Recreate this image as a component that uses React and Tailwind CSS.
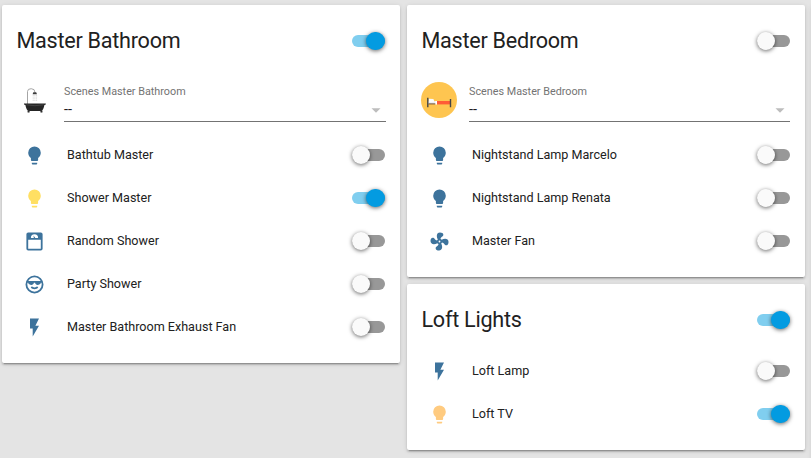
import React from 'react';

const PATHS = {
  bulb: 'M12,2A7,7 0 0,0 5,9C5,11.38 6.19,13.47 8,14.74V17A1,1 0 0,0 9,18H15A1,1 0 0,0 16,17V14.74C17.81,13.47 19,11.38 19,9A7,7 0 0,0 12,2M9,21A1,1 0 0,0 10,22H14A1,1 0 0,0 15,21V20H9V21Z',
  flash: 'M7,2V13H10V22L17,10H13L17,2H7Z',
  scale: 'M5,2H19A2,2 0 0,1 21,4V20A2,2 0 0,1 19,22H5A2,2 0 0,1 3,20V4A2,2 0 0,1 5,2M12,4A4,4 0 0,0 8,8H11.26L10.85,5.23L12.9,8H16A4,4 0 0,0 12,4M5,10V20H19V10H5Z',
  fan: 'M12,11A1,1 0 0,0 11,12A1,1 0 0,0 12,13A1,1 0 0,0 13,12A1,1 0 0,0 12,11M12.5,2C17,2 17.11,5.57 14.75,6.75C13.76,7.24 13.32,8.29 13.13,9.22C13.61,9.42 14.03,9.73 14.35,10.13C18.05,8.13 22.03,8.92 22.03,12.5C22.03,17 18.46,17.1 17.28,14.73C16.78,13.74 15.72,13.3 14.79,13.11C14.59,13.59 14.28,14 13.88,14.34C15.87,18.03 15.08,22 11.5,22C7,22 6.91,18.42 9.27,17.24C10.25,16.75 10.69,15.71 10.89,14.79C10.4,14.59 9.97,14.27 9.65,13.87C5.96,15.85 2,15.07 2,11.5C2,7 5.56,6.89 6.74,9.26C7.24,10.25 8.29,10.68 9.22,10.87C9.41,10.39 9.73,9.97 10.14,9.65C8.15,5.96 8.94,2 12.5,2Z',
  cool: 'M19,10C19,11.38 16.88,12.5 15.5,12.5C14.12,12.5 12.75,11.38 12.75,10H11.25C11.25,11.38 9.88,12.5 8.5,12.5C7.12,12.5 5,11.38 5,10H4.25C4.09,10.64 4,11.31 4,12A8,8 0 0,0 12,20A8,8 0 0,0 20,12C20,11.31 19.91,10.64 19.75,10H19M12,4C9.04,4 6.45,5.61 5.07,8H18.93C17.55,5.61 14.96,4 12,4M22,12A10,10 0 0,1 12,22A10,10 0 0,1 2,12A10,10 0 0,1 12,2A10,10 0 0,1 22,12M12,17.23C10.25,17.23 8.71,16.5 7.81,15.42L9.23,14C9.68,14.72 10.75,15.23 12,15.23C13.25,15.23 14.32,14.72 14.77,14L16.19,15.42C15.29,16.5 13.75,17.23 12,17.23Z',
};

function Toggle({ on }) {
  return (
    <button
      type="button"
      role="switch"
      aria-checked={!!on}
      className={`flex h-[12.6px] w-[33px] shrink-0 items-center rounded-full ${on ? 'justify-end bg-[#80ceef]' : 'justify-start bg-[#989898]'}`}
    >
      <span className={`h-[18px] shrink-0 rounded-full shadow-[0_1px_4px_rgba(0,0,0,0.6)] ${on ? 'w-[19px] bg-[#039be1]' : 'w-[18px] bg-[#fafafa]'}`} />
    </button>
  );
}

function Card({ title, on, children }) {
  return (
    <section className="rounded-[2px] bg-white pr-[15px] pb-[14.5px] pl-[14px] shadow-[0_2px_2px_rgba(0,0,0,0.14),0_1px_5px_rgba(0,0,0,0.12),0_3px_1px_-2px_rgba(0,0,0,0.2)]">
      <header className="flex h-[65.5px] items-center justify-between pt-[6.5px]">
        <h2 className="ml-[0.5px] text-[21.6px] leading-9 tracking-[-0.26px]">{title}</h2>
        <Toggle on={on} />
      </header>
      {children}
    </section>
  );
}

function SceneSelect({ label, icon, className = '' }) {
  return (
    <div className={`flex h-[63px] pt-[11.5px] ${className}`}>
      <div className="w-12 shrink-0">{icon}</div>
      <div className="flex h-[40px] flex-1 flex-col border-b border-[#737373]">
        <span className="mt-[2px] text-[10.8px] leading-[16px] text-[#737373]">{label}</span>
        <div className="flex h-[19px] items-center justify-between pr-[5px]">
          <span className="text-[14.4px] leading-5">--</span>
          <svg className="mt-px h-[5px] w-[10px]" viewBox="0 0 10 5" fill="#bdbdbd">
            <path d="M0.5 0.3H9.5L5 4.8Z" />
          </svg>
        </div>
      </div>
    </div>
  );
}

function Row({ icon, tint = 'fill-[#3d739c]', name, on }) {
  return (
    <div className="flex h-[43px] items-center">
      <div className="w-9 shrink-0 pl-[7px]">
        <svg viewBox="-0.78 -0.78 25.56 25.56" className={`mt-px size-[23px] ${tint}`}>
          <path d={PATHS[icon]} />
        </svg>
      </div>
      <span className="ml-[15px] flex-1 text-[12.6px] leading-[18px] tracking-[-0.01px]">{name}</span>
      <Toggle on={on} />
    </div>
  );
}

const bathtub = (
  <svg className="size-9" viewBox="0 0 36 36">
    <path d="M11.5 22V9.5Q11.5 6.7 15.2 6.7Q19 6.7 19 10.5" fill="none" stroke="#a5a5a5" strokeWidth="1" />
    <path d="M16.6 12.3L17.3 10.3H20.2L21 12.3Z" fill="#3b3b3b" />
    <path d="M17.2 13V19M18.9 13V19M20.6 13V19" stroke="#cfcfcf" strokeWidth="0.7" strokeDasharray="1.5 0.8" />
    <path d="M8 21.4H29.8V22.6L28.4 23Q27.5 28.5 25 29H12.8Q10.3 28.5 9.4 23L8 22.6Z" fill="#252525" />
    <path d="M13 28L12.3 30.6M25 28L25.7 30.6" stroke="#303030" strokeWidth="2" />
    <path d="M10.3 22.8Q19 24.6 27.5 22.8" fill="none" stroke="#626262" strokeWidth="0.5" />
  </svg>
);

const bed = (
  <svg className="size-9" viewBox="0 0 36 36">
    <circle cx="18" cy="18" r="18" fill="#fec550" />
    <path d="M7 19.3H29V21.8H7Z" fill="#eceff1" />
    <path d="M7.6 16.7L12.4 17L13.6 20H7.6Z" fill="#fafafa" />
    <path d="M16 19H29V22.4H16Z" fill="#ff5b36" />
    <path d="M14.3 19H16V22.6H14.3Z" fill="#fff" />
    <path d="M7.5 21.9H14.3" stroke="#5d4037" strokeWidth="0.9" />
    <path d="M6.1 15.8H7.5V25.2H6.1ZM28.8 16.9H30.2V25.2H28.8Z" fill="#444" />
  </svg>
);

export default function App() {
  return (
    <main className="flex h-[458px] w-[811px] items-start gap-[7px] overflow-hidden bg-[#e4e4e4] pt-[5px] pl-[2px] font-[Roboto,sans-serif] text-[#212121] antialiased">
      <div className="w-[398px] shrink-0">
        <Card title="Master Bathroom" on>
          <SceneSelect className="-mr-px" label="Scenes Master Bathroom" icon={bathtub} />
          <Row icon="bulb" name="Bathtub Master" />
          <Row icon="bulb" tint="fill-[#ffdf62]" name="Shower Master" on />
          <Row icon="scale" name="Random Shower" />
          <Row icon="cool" name="Party Shower" />
          <Row icon="flash" name="Master Bathroom Exhaust Fan" />
        </Card>
      </div>
      <div className="flex w-[398px] shrink-0 flex-col gap-[7px]">
        <Card title="Master Bedroom">
          <SceneSelect label="Scenes Master Bedroom" icon={bed} />
          <Row icon="bulb" name="Nightstand Lamp Marcelo" />
          <Row icon="bulb" name="Nightstand Lamp Renata" />
          <Row icon="fan" name="Master Fan" />
        </Card>
        <Card title="Loft Lights" on>
          <Row icon="flash" name="Loft Lamp" />
          <Row icon="bulb" tint="fill-[#ffcb80]" name="Loft TV" on />
        </Card>
      </div>
      <div className="h-[470px] w-[398px] shrink-0 rounded-[2px] bg-white shadow-[0_2px_2px_rgba(0,0,0,0.14),0_1px_5px_rgba(0,0,0,0.12)]" />
    </main>
  );
}
